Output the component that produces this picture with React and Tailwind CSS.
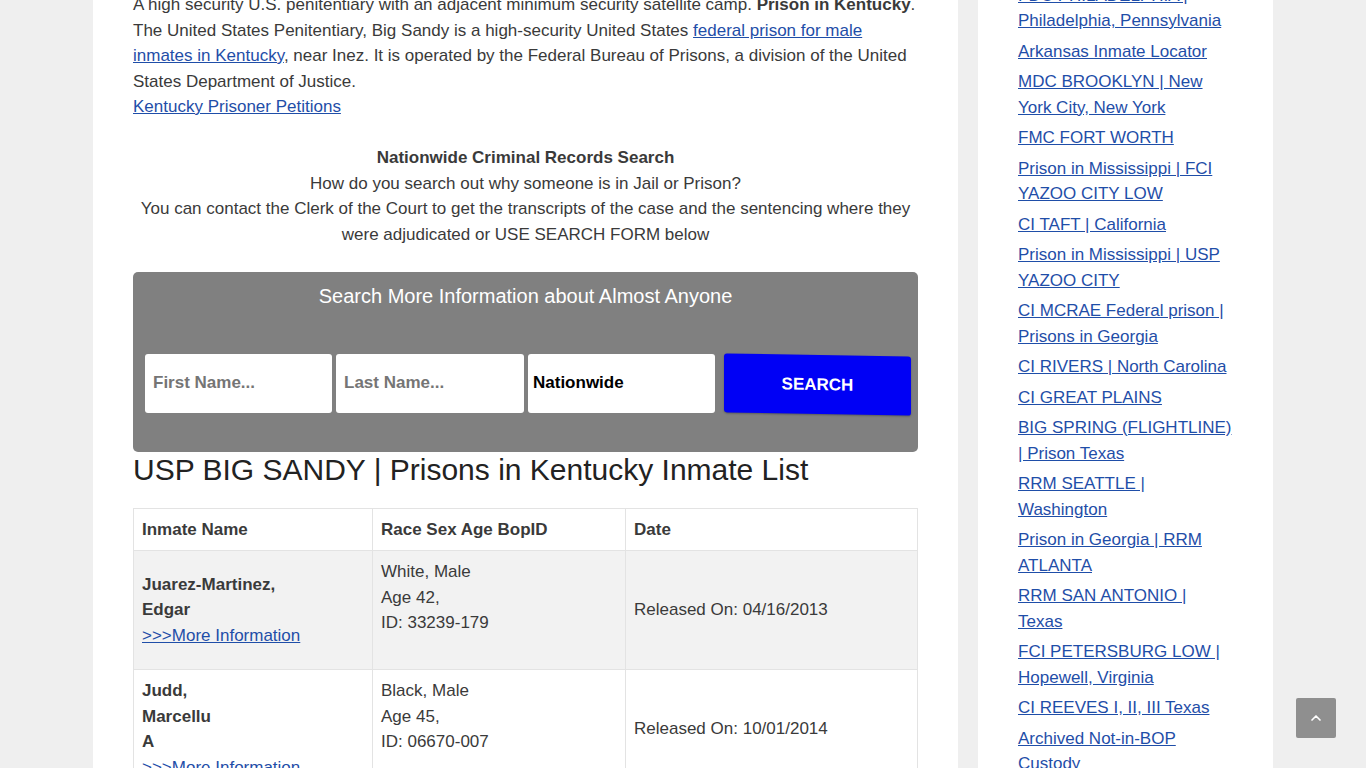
import React from 'react';
import { ChevronUp } from 'lucide-react';

const sidebarLinks = [
  'FDC PHILADELPHIA | Philadelphia, Pennsylvania',
  'Arkansas Inmate Locator',
  'MDC BROOKLYN | New York City, New York',
  'FMC FORT WORTH',
  'Prison in Mississippi | FCI YAZOO CITY LOW',
  'CI TAFT | California',
  'Prison in Mississippi | USP YAZOO CITY',
  'CI MCRAE Federal prison | Prisons in Georgia',
  'CI RIVERS | North Carolina',
  'CI GREAT PLAINS',
  'BIG SPRING (FLIGHTLINE) | Prison Texas',
  'RRM SEATTLE | Washington',
  'Prison in Georgia | RRM ATLANTA',
  'RRM SAN ANTONIO | Texas',
  'FCI PETERSBURG LOW | Hopewell, Virginia',
  'CI REEVES I, II, III Texas',
  'Archived Not-in-BOP Custody',
];

const inmates = [
  {
    name: ['Juarez-Martinez,', 'Edgar'],
    info: ['White, Male', 'Age 42,', 'ID: 33239-179'],
    date: 'Released On: 04/16/2013',
  },
  {
    name: ['Judd,', 'Marcellu', 'A'],
    info: ['Black, Male', 'Age 45,', 'ID: 06670-007'],
    date: 'Released On: 10/01/2014',
  },
  {
    name: ['Juergens,', 'Michael'],
    info: ['White, Male', 'Age 51,', 'ID: 10874-032'],
    date: 'Released On: 08/22/2015',
  },
];

const link = 'text-[#1f4ea8] underline';

const SearchBox = () => (
  <div className="bg-[#808080] rounded-[5px] pt-[12px] pb-[38px] -mt-[1px]">
    <p className="text-center text-white text-[20px] leading-[25px]">
      Search More Information about Almost Anyone
    </p>
    <div className="flex items-center pl-[12px] mt-[44px]">
      <input
        className="w-[187px] h-[59px] bg-white rounded-[3px] px-[8px] font-bold text-[17px] placeholder:text-[#757575] outline-none"
        placeholder="First Name..."
      />
      <input
        className="w-[188px] h-[59px] bg-white rounded-[3px] px-[8px] ml-[4px] font-bold text-[17px] placeholder:text-[#757575] outline-none"
        placeholder="Last Name..."
      />
      <input
        className="w-[187px] h-[59px] bg-white rounded-[3px] px-[5px] ml-[4px] font-bold text-[17px] text-black outline-none"
        value="Nationwide"
        readOnly
      />
      <button className="w-[187px] h-[59px] ml-[9px] mt-[2px] bg-[#0000f5] rounded-[3px] text-white font-bold text-[17px] skew-y-1 shadow-[0_1px_2px_rgba(0,0,0,0.3)]">
        SEARCH
      </button>
    </div>
  </div>
);

const InmateTable = () => (
  <table className="w-full border-collapse border border-[#e3e3e3] mb-[26px]">
    <thead>
      <tr className="bg-white">
        <th className="w-[239px] border border-[#e3e3e3] px-[8px] py-[8px] text-left font-bold">Inmate Name</th>
        <th className="w-[253px] border border-[#e3e3e3] px-[8px] py-[8px] text-left font-bold">Race Sex Age BopID</th>
        <th className="border border-[#e3e3e3] px-[8px] py-[8px] text-left font-bold">Date</th>
      </tr>
    </thead>
    <tbody>
      {inmates.map((row, i) => (
        <tr key={row.date} className={i % 2 === 0 ? 'bg-[#f2f2f2]' : 'bg-white'}>
          <td className="border border-[#e3e3e3] px-[8px] py-[8px] align-middle">
            {row.name.map(n => (
              <div key={n} className="font-bold">{n}</div>
            ))}
            <a href="#" className={link}>&gt;&gt;&gt;More Information</a>
          </td>
          <td className="border border-[#e3e3e3] px-[8px] py-[8px] align-middle">
            {row.info.map(n => (
              <div key={n}>{n}</div>
            ))}
            <div>&nbsp;</div>
          </td>
          <td className="border border-[#e3e3e3] px-[8px] py-[8px] align-middle">{row.date}</td>
        </tr>
      ))}
    </tbody>
  </table>
);

const App = () => {
  return (
    <div className="h-[768px] overflow-hidden bg-[#efefef] font-['Liberation_Sans',Arial,sans-serif] text-[17px] leading-[1.5] text-[#3a3a3a]">
      <div className="mx-auto w-[1180px] flex items-start gap-[20px]">
        <main className="w-[865px] bg-white px-[40px] -mt-[8px]">
          <p className="mb-[25.5px]">
            A high security U.S. penitentiary with an adjacent minimum security satellite camp.{' '}
            <strong>Prison in Kentucky</strong>. The United States Penitentiary, Big Sandy is a high-security
            United States{' '}
            <a href="#" className={link}>federal prison for male inmates in Kentucky</a>, near Inez. It is
            operated by the Federal Bureau of Prisons, a division of the United States Department of Justice.
            <br />
            <a href="#" className={link}>Kentucky Prisoner Petitions</a>
          </p>

          <p className="text-center mb-[25.5px]">
            <strong>Nationwide Criminal Records Search</strong>
            <br />
            How do you search out why someone is in Jail or Prison?
            <br />
            You can contact the Clerk of the Court to get the transcripts of the case and the sentencing where
            they were adjudicated or USE SEARCH FORM below
          </p>

          <SearchBox />

          <h2 className="text-[30px] leading-[36px] text-[#222] mb-[20px]">
            USP BIG SANDY | Prisons in Kentucky Inmate List
          </h2>

          <InmateTable />
        </main>

        <aside className="w-[295px] bg-white px-[40px] pb-[40px] -mt-[17.5px]">
          <ul>
            {sidebarLinks.map(item => (
              <li key={item} className="mb-[5px]">
                <a href="#" className={link}>{item}</a>
              </li>
            ))}
          </ul>
        </aside>
      </div>

      <button className="fixed right-[30px] bottom-[30px] w-[40px] h-[40px] bg-[rgba(0,0,0,0.4)] rounded-[2px] flex items-center justify-center text-white">
        <ChevronUp size={16} strokeWidth={2.5} />
      </button>
    </div>
  );
};

export default App;
